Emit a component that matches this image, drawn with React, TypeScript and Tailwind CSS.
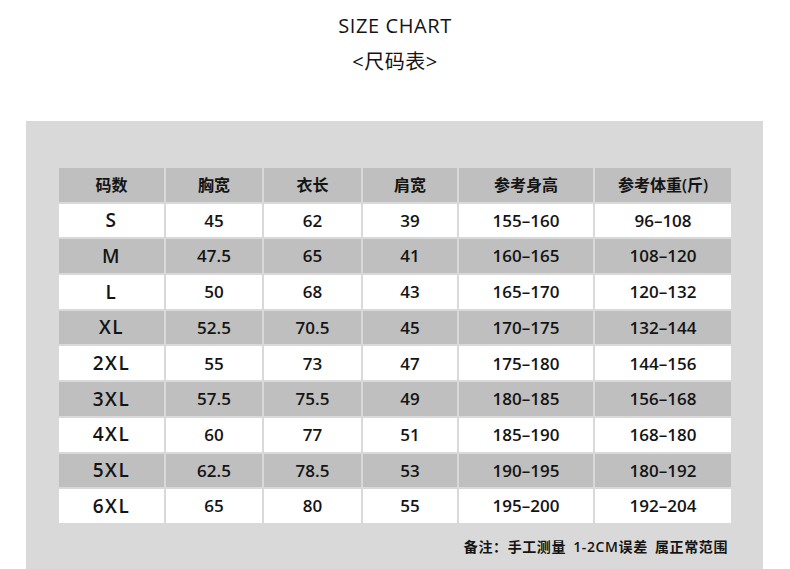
import React from "react";

const header = ["码数", "胸宽", "衣长", "肩宽", "参考身高", "参考体重(斤)"];
const rows = [
  ["S", "45", "62", "39", "155–160", "96–108"],
  ["M", "47.5", "65", "41", "160–165", "108–120"],
  ["L", "50", "68", "43", "165–170", "120–132"],
  ["XL", "52.5", "70.5", "45", "170–175", "132–144"],
  ["2XL", "55", "73", "47", "175–180", "144–156"],
  ["3XL", "57.5", "75.5", "49", "180–185", "156–168"],
  ["4XL", "60", "77", "51", "185–190", "168–180"],
  ["5XL", "62.5", "78.5", "53", "190–195", "180–192"],
  ["6XL", "65", "80", "55", "195–200", "192–204"],
];

const sans = "font-['Open_Sans','Noto_Sans_CJK_SC',sans-serif]";

export default function App() {
  return (
    <div className={`w-[790px] h-[569px] bg-white flex flex-col items-center overflow-hidden ${sans} text-[#141414]`}>
      <div className="mt-[12px] h-[28px] leading-[28px] text-[20px] tracking-[0.6px] font-normal">SIZE CHART</div>
      <div className="mt-[8px] h-[28px] leading-[28px] text-[20px] tracking-[0.5px] font-normal">&lt;尺码表&gt;</div>
      <div className="mt-[45px] ml-[-1px] w-[737px] flex-1 bg-[#d9d9d9] flex flex-col pt-[47px] pl-[33px] pr-[32px]">
        <div className="grid grid-cols-[105px_96px_97px_94px_134px_136px] auto-rows-[33.7px] gap-[2px]">
          {header.map((h, i) => (
            <div key={"h" + i} className="bg-[#bfbfbf] flex items-center justify-center text-[16px] font-semibold">
              {h}
            </div>
          ))}
          {rows.map((r, ri) =>
            r.map((c, ci) => (
              <div
                key={ri + "-" + ci}
                className={`${ri % 2 === 1 ? "bg-[#bfbfbf]" : "bg-white"} flex items-center justify-center ${ci === 0 ? "text-[19px] font-semibold tracking-[1.5px]" : "text-[17px] font-semibold"}`}
              >
                {c}
              </div>
            ))
          )}
        </div>
        <div className="mt-[14px] flex justify-end pr-[3px] text-[14px] font-semibold leading-[20px] tracking-[0.6px] [word-spacing:3px]">
          备注：手工测量 1-2CM误差 属正常范围
        </div>
      </div>
    </div>
  );
}
